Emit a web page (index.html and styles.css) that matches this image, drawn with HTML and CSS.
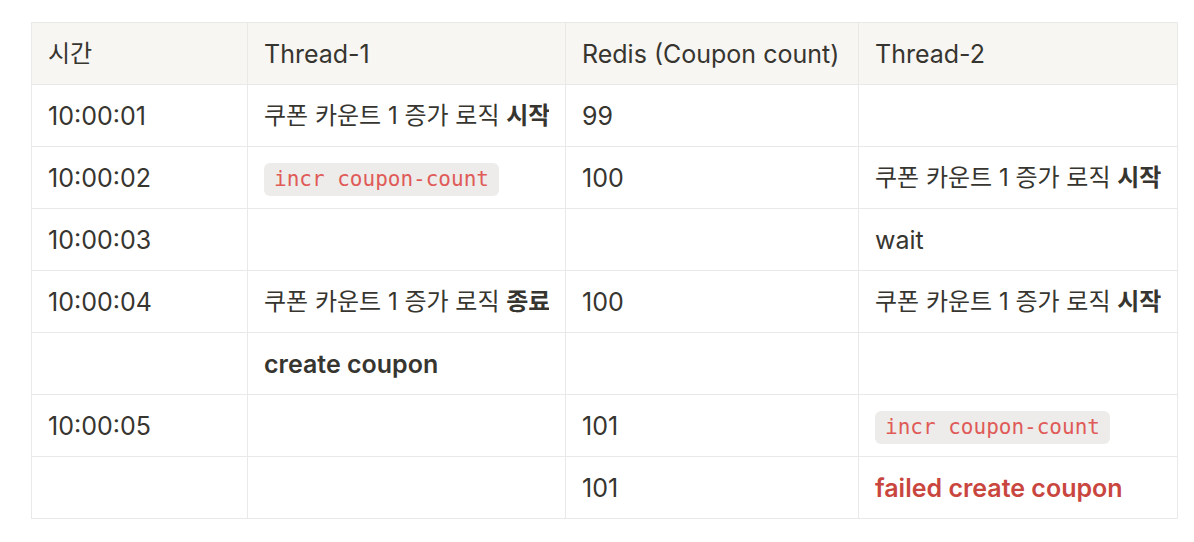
FILE: index.html
```html
<!DOCTYPE html>
<html lang="ko">
<head>
<meta charset="utf-8">
<title>Coupon count timeline</title>
<link rel="stylesheet" href="styles.css">
</head>
<body>
<div class="page">
  <table class="grid">
    <colgroup>
      <col class="c-time">
      <col class="c-t1">
      <col class="c-redis">
      <col class="c-t2">
    </colgroup>
    <thead>
      <tr>
        <th><div class="cell"><span class="ko">시간</span></div></th>
        <th><div class="cell">Thread-1</div></th>
        <th><div class="cell">Redis (Coupon count)</div></th>
        <th><div class="cell">Thread-2</div></th>
      </tr>
    </thead>
    <tbody>
      <tr>
        <td><div class="cell">10:00:01</div></td>
        <td><div class="cell"><span class="ko">쿠폰 카운트 1 증가 로직 <b>시작</b></span></div></td>
        <td><div class="cell">99</div></td>
        <td><div class="cell"></div></td>
      </tr>
      <tr>
        <td><div class="cell">10:00:02</div></td>
        <td><div class="cell"><code>incr coupon-count</code></div></td>
        <td><div class="cell">100</div></td>
        <td><div class="cell"><span class="ko">쿠폰 카운트 1 증가 로직 <b>시작</b></span></div></td>
      </tr>
      <tr>
        <td><div class="cell">10:00:03</div></td>
        <td><div class="cell"></div></td>
        <td><div class="cell"></div></td>
        <td><div class="cell">wait</div></td>
      </tr>
      <tr>
        <td><div class="cell">10:00:04</div></td>
        <td><div class="cell"><span class="ko">쿠폰 카운트 1 증가 로직 <b>종료</b></span></div></td>
        <td><div class="cell">100</div></td>
        <td><div class="cell"><span class="ko">쿠폰 카운트 1 증가 로직 <b>시작</b></span></div></td>
      </tr>
      <tr>
        <td><div class="cell"></div></td>
        <td><div class="cell"><b>create coupon</b></div></td>
        <td><div class="cell"></div></td>
        <td><div class="cell"></div></td>
      </tr>
      <tr>
        <td><div class="cell">10:00:05</div></td>
        <td><div class="cell"></div></td>
        <td><div class="cell">101</div></td>
        <td><div class="cell"><code>incr coupon-count</code></div></td>
      </tr>
      <tr>
        <td><div class="cell"></div></td>
        <td><div class="cell"></div></td>
        <td><div class="cell">101</div></td>
        <td><div class="cell"><b class="red">failed create coupon</b></div></td>
      </tr>
    </tbody>
  </table>
</div>
</body>
</html>
```

FILE: styles.css
```css
html, body {
  margin: 0;
  padding: 0;
  background: #ffffff;
}

body {
  font-family: Inter, "Noto Sans CJK KR", "Noto Sans", sans-serif;
  color: #37352f;
  font-size: 25px;
}

.page {
  padding: 22px 17px 0 31px;
}

.grid {
  border-collapse: collapse;
  table-layout: fixed;
  width: 1146px;
}

.c-time { width: 216px; }
.c-t1 { width: 318px; }
.c-redis { width: 293px; }
.c-t2 { width: 319px; }

.grid th,
.grid td {
  border: 1px solid #e9e9e7;
  padding: 13px 16px 12px 16px;
  text-align: left;
  vertical-align: middle;
  font-weight: 400;
}

.grid th {
  background: #f7f6f3;
}

.cell {
  height: 36px;
  display: flex;
  align-items: center;
  white-space: nowrap;
  overflow: hidden;
  line-height: 36px;
}

.ko {
  font-size: 24px;
}

.grid b {
  font-weight: 600;
}

.grid b.red {
  color: #c9463f;
}

code {
  font-family: "DejaVu Sans Mono", "Liberation Mono", monospace;
  font-size: 21px;
  line-height: 25px;
  color: #e05a58;
  background: #edecea;
  border-radius: 6px;
  padding: 4px 10px;
  margin-top: 2px;
}
```
